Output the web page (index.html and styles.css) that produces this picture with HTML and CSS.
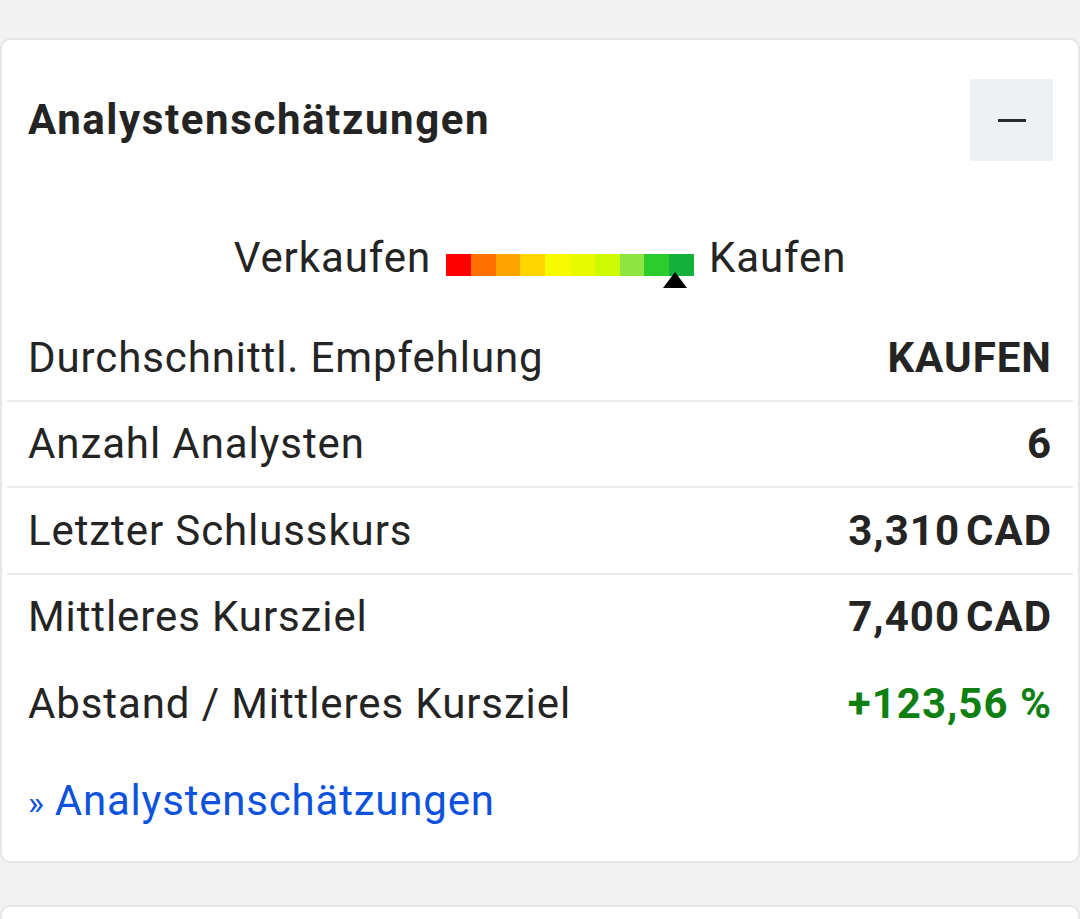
FILE: index.html
```html
<!DOCTYPE html>
<html lang="de">
<head>
<meta charset="utf-8">
<link rel="stylesheet" href="styles.css">
</head>
<body>
<div class="card">
  <div class="header">
    <h2 class="title">Analystenschätzungen</h2>
    <button class="toggle" aria-label="Einklappen"><span class="minus"></span></button>
  </div>
  <div class="gauge">
    <span class="gauge-label">Verkaufen</span>
    <span class="bar">
      <span class="seg s1"></span><span class="seg s2"></span><span class="seg s3"></span><span class="seg s4"></span><span class="seg s5"></span><span class="seg s6"></span><span class="seg s7"></span><span class="seg s8"></span><span class="seg s9"></span><span class="seg s10"></span>
      <span class="marker"></span>
    </span>
    <span class="gauge-label">Kaufen</span>
  </div>
  <div class="row line"><span>Durchschnittl. Empfehlung</span><span class="val">KAUFEN</span></div>
  <div class="row line"><span>Anzahl Analysten</span><span class="val">6</span></div>
  <div class="row line"><span>Letzter Schlusskurs</span><span class="val">3,310<span class="cur">CAD</span></span></div>
  <div class="row"><span>Mittleres Kursziel</span><span class="val">7,400<span class="cur">CAD</span></span></div>
  <div class="row"><span>Abstand / Mittleres Kursziel</span><span class="val pos">+123,56 %</span></div>
  <div class="link-wrap"><a class="link" href="#"><span class="raquo">»</span>Analystenschätzungen</a></div>
</div>
<div class="card next"></div>
</body>
</html>
```
FILE: styles.css
```css
html, body {
  margin: 0;
  padding: 0;
  background: #f2f2f2;
  font-family: Roboto, "Noto Sans", sans-serif;
  color: #242424;
}
.card {
  margin-top: 38px;
  background: #fff;
  border: 2px solid #e6e6e6;
  border-radius: 10px;
  padding: 0 5px;
}
.card.next {
  margin-top: 42px;
  height: 60px;
}
.header {
  display: flex;
  align-items: center;
  justify-content: space-between;
  padding: 39px 20px 0 21px;
}
.title {
  margin: 0;
  font-size: 42px;
  font-weight: 700;
  letter-spacing: 1.6px;
  line-height: 82px;
}
.toggle {
  width: 83px;
  height: 82px;
  border: none;
  background: #eef1f4;
  display: flex;
  align-items: center;
  justify-content: center;
  padding: 0;
}
.minus {
  display: block;
  width: 28px;
  height: 3px;
  background: #2a2a2a;
}
.gauge {
  height: 154px;
  box-sizing: border-box;
  padding-top: 72px;
  display: flex;
  justify-content: center;
  align-items: flex-start;
  gap: 15px;
}
.gauge-label {
  font-size: 42px;
  letter-spacing: 0.9px;
  line-height: 50px;
}
.bar {
  position: relative;
  display: flex;
  width: 248px;
  height: 22px;
  margin-top: 21px;
}
.seg { flex: 1; }
.s1 { background: #ff0000; }
.s2 { background: #ff7000; }
.s3 { background: #ffa300; }
.s4 { background: #ffd500; }
.s5 { background: #f7fa00; }
.s6 { background: #e9fa00; }
.s7 { background: #cdfa00; }
.s8 { background: #8ee542; }
.s9 { background: #2ccc2c; }
.s10 { background: #14b03c; }
.marker {
  position: absolute;
  left: 217px;
  top: 18px;
  width: 0;
  height: 0;
  border-left: 12px solid transparent;
  border-right: 12px solid transparent;
  border-bottom: 16px solid #000;
}
.row {
  display: flex;
  justify-content: space-between;
  align-items: center;
  height: 84.5px;
  padding: 0 21px 0 21px;
  font-size: 42px;
  letter-spacing: 0.9px;
  border-bottom: 2px solid transparent;
}
.row.line {
  border-bottom-color: #ebebeb;
}
.val {
  font-weight: 700;
  letter-spacing: 1px;
}
.cur {
  margin-left: 6px;
}
.pos {
  color: #0e7f12;
}
.link-wrap {
  padding: 28px 21px 33px;
  font-size: 42px;
  line-height: 50px;
}
.link {
  display: block;
  color: #0d52dc;
  letter-spacing: 0.8px;
  text-decoration: none;
}
.raquo {
  font-size: 34px;
  margin-right: 10px;
}
```
